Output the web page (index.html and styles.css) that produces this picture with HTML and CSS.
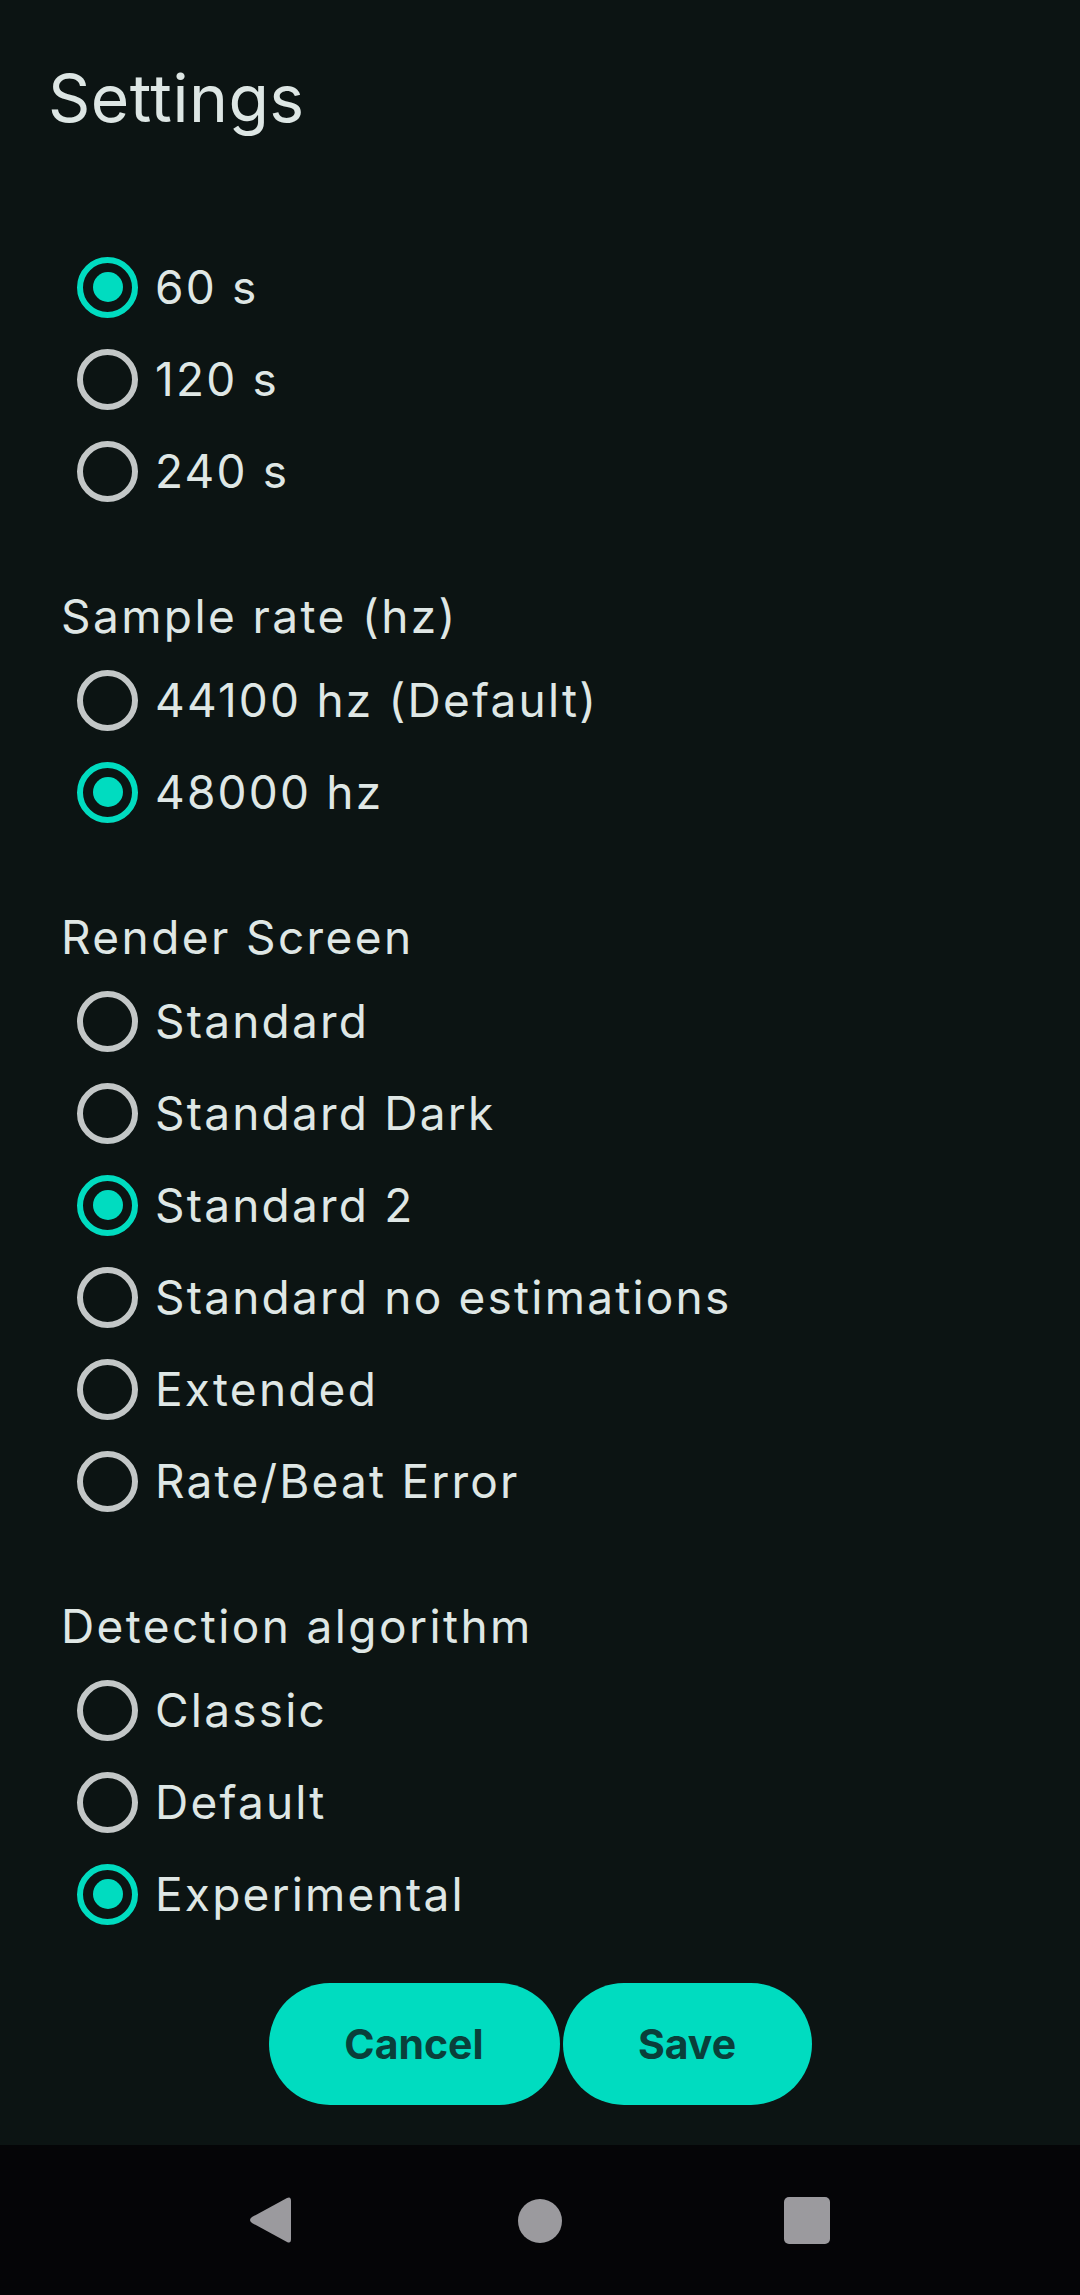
FILE: index.html
```html
<!DOCTYPE html>
<html lang="en">
<head>
<meta charset="utf-8">
<title>Settings</title>
<link rel="stylesheet" href="styles.css">
</head>
<body>
<div class="app">
  <main class="content">
    <h1 class="title">Settings</h1>

    <section class="group first">
      <div class="option"><span class="radio checked"></span><span class="label">60 s</span></div>
      <div class="option"><span class="radio"></span><span class="label">120 s</span></div>
      <div class="option"><span class="radio"></span><span class="label">240 s</span></div>
    </section>

    <section class="group">
      <div class="heading">Sample rate (hz)</div>
      <div class="option"><span class="radio"></span><span class="label">44100 hz (Default)</span></div>
      <div class="option"><span class="radio checked"></span><span class="label">48000 hz</span></div>
    </section>

    <section class="group">
      <div class="heading">Render Screen</div>
      <div class="option"><span class="radio"></span><span class="label">Standard</span></div>
      <div class="option"><span class="radio"></span><span class="label">Standard Dark</span></div>
      <div class="option"><span class="radio checked"></span><span class="label">Standard 2</span></div>
      <div class="option"><span class="radio"></span><span class="label">Standard no estimations</span></div>
      <div class="option"><span class="radio"></span><span class="label">Extended</span></div>
      <div class="option"><span class="radio"></span><span class="label">Rate/Beat Error</span></div>
    </section>

    <section class="group">
      <div class="heading">Detection algorithm</div>
      <div class="option"><span class="radio"></span><span class="label">Classic</span></div>
      <div class="option"><span class="radio"></span><span class="label">Default</span></div>
      <div class="option"><span class="radio checked"></span><span class="label">Experimental</span></div>
    </section>

    <div class="actions">
      <button class="btn btn-cancel">Cancel</button>
      <button class="btn btn-save">Save</button>
    </div>
  </main>

  <nav class="navbar">
    <svg class="nav-back" width="46" height="50" viewBox="0 0 46 50">
      <path d="M40 3 Q44 1 44 6 L44 44 Q44 49 40 47 L5 28 Q1 25 5 22 Z" fill="#9b9a9e"/>
    </svg>
    <span class="nav-home"></span>
    <span class="nav-recent"></span>
  </nav>
</div>
</body>
</html>
```

FILE: styles.css
```css
* {
  box-sizing: border-box;
}

html, body {
  margin: 0;
  padding: 0;
  background: #0c1413;
}

body {
  font-family: "Inter", "Noto Sans", sans-serif;
  color: #dfe7e5;
}

.app {
  width: 1080px;
  height: 2295px;
  display: flex;
  flex-direction: column;
}

.content {
  flex: 1;
  padding-top: 58px;
  display: flex;
  flex-direction: column;
}

.title {
  margin: 0;
  padding-left: 48px;
  font-size: 66px;
  font-weight: 400;
  line-height: 80px;
  letter-spacing: 0.5px;
  color: #dde6e4;
}

.group {
  display: flex;
  flex-direction: column;
  margin-top: 61px;
}

.group.first {
  margin-top: 103px;
}

.heading {
  height: 76px;
  line-height: 76px;
  padding-left: 61px;
  font-size: 46px;
  letter-spacing: 2.4px;
}

.option {
  height: 92px;
  display: flex;
  align-items: center;
  padding-left: 77px;
  gap: 17px;
}

.label {
  font-size: 46px;
  line-height: 92px;
  letter-spacing: 2.2px;
}

.radio {
  width: 61px;
  height: 61px;
  border-radius: 50%;
  border: 6px solid #c3c7c7;
  display: flex;
  align-items: center;
  justify-content: center;
  flex: none;
}

.radio.checked {
  border-color: #00dcc0;
}

.radio.checked::after {
  content: "";
  width: 30px;
  height: 30px;
  border-radius: 50%;
  background: #00dcc0;
}

.actions {
  margin-top: 43px;
  display: flex;
  justify-content: center;
  gap: 3px;
}

.btn {
  height: 122px;
  border: none;
  border-radius: 61px;
  background: #00dcc0;
  color: #0a3f3a;
  font-family: "Inter", "Noto Sans", sans-serif;
  font-size: 41px;
  font-weight: 700;
  padding: 0 75px;
}

.btn-cancel {
  width: 291px;
}

.btn-save {
  width: 249px;
}

.navbar {
  height: 150px;
  background: #050507;
  position: relative;
  display: flex;
  align-items: center;
}

.nav-back {
  position: absolute;
  left: 247px;
  top: 50px;
}

.nav-home {
  position: absolute;
  left: 518px;
  top: 54px;
  width: 44px;
  height: 44px;
  border-radius: 50%;
  background: #9b9a9e;
}

.nav-recent {
  position: absolute;
  left: 784px;
  top: 52px;
  width: 46px;
  height: 47px;
  border-radius: 5px;
  background: #9b9a9e;
}
```
